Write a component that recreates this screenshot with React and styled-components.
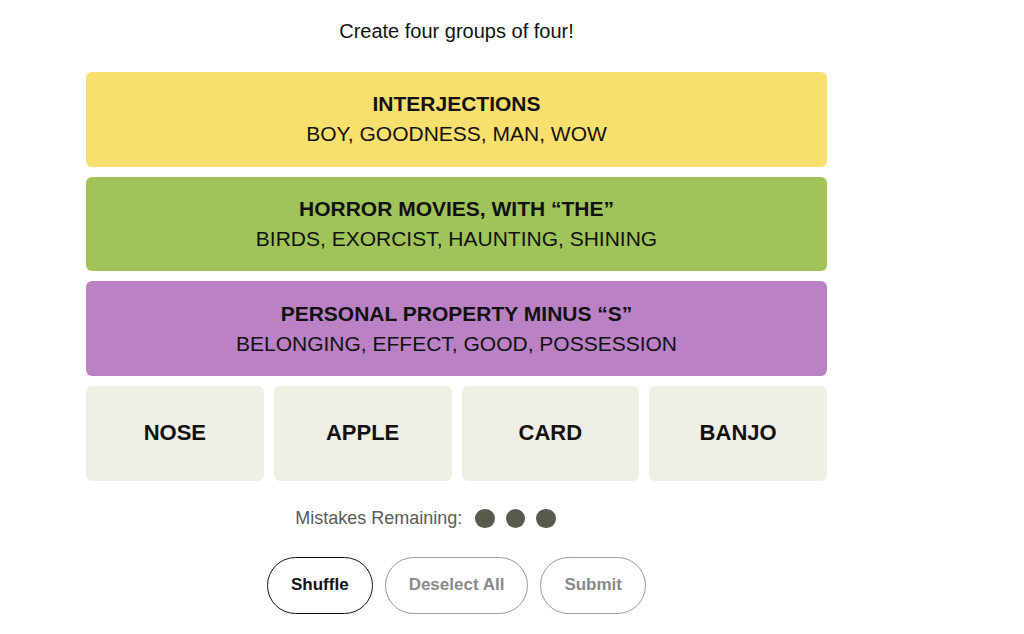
import React from "react";
import styled, { createGlobalStyle } from "styled-components";

const Global = createGlobalStyle`
  html, body { margin: 0; padding: 0; background: #ffffff; }
  body { font-family: "Liberation Sans", Arial, sans-serif; color: #121212; }
`;

const Page = styled.main`
  width: 741px;
  margin-left: 86px;
  padding-top: 19px;
  display: flex;
  flex-direction: column;
  align-items: center;
`;

const Prompt = styled.p`
  margin: 0;
  font-size: 20px;
  line-height: 24px;
  font-weight: 400;
  color: #121212;
`;

const Board = styled.section`
  margin-top: 29px;
  width: 100%;
  display: flex;
  flex-direction: column;
  gap: 10px;
`;

const Group = styled.div`
  height: 94.7px;
  border-radius: 6px;
  background: ${(p) => p.$color};
  display: flex;
  flex-direction: column;
  align-items: center;
  justify-content: center;
  text-transform: uppercase;
`;

const GroupTitle = styled.h3`
  margin: 0;
  font-size: 21px;
  font-weight: 700;
  line-height: 30px;
`;

const GroupMembers = styled.p`
  margin: 0;
  font-size: 21px;
  font-weight: 400;
  line-height: 30px;
`;

const TileRow = styled.div`
  display: grid;
  grid-template-columns: repeat(4, 1fr);
  gap: 10px;
`;

const Tile = styled.button`
  height: 94.7px;
  border: none;
  border-radius: 6px;
  background: #efefe6;
  color: #121212;
  font-family: inherit;
  font-size: 22px;
  font-weight: 700;
  text-transform: uppercase;
  padding: 0;
`;

const Mistakes = styled.div`
  margin-top: 27px;
  margin-right: 62px;
  display: flex;
  align-items: center;
  gap: 13px;
  font-size: 18px;
  color: #5a5a5a;
`;

const Dots = styled.span`
  display: flex;
  gap: 11px;
`;

const Dot = styled.span`
  width: 19.5px;
  height: 19.5px;
  border-radius: 50%;
  background: #5a594e;
`;

const Actions = styled.div`
  margin-top: 28px;
  display: flex;
  gap: 12px;
`;

const Pill = styled.button`
  height: 57px;
  padding: 0 23px;
  border-radius: 32px;
  background: #fff;
  border: 1px solid ${(p) => (p.$active ? "#121212" : "#9a9a9a")};
  color: ${(p) => (p.$active ? "#121212" : "#8a8a8a")};
  font-family: inherit;
  font-size: 17px;
  font-weight: 700;
`;

const groups = [
  { color: "#f9df6d", title: "Interjections", members: "Boy, Goodness, Man, Wow" },
  { color: "#a0c35a", title: "Horror Movies, With “The”", members: "Birds, Exorcist, Haunting, Shining" },
  { color: "#ba81c5", title: "Personal Property Minus “S”", members: "Belonging, Effect, Good, Possession" },
];

const tiles = ["Nose", "Apple", "Card", "Banjo"];

export default function App() {
  return (
    <>
      <Global />
      <Page>
        <Prompt>Create four groups of four!</Prompt>
        <Board>
          {groups.map((g) => (
            <Group key={g.title} $color={g.color}>
              <GroupTitle>{g.title}</GroupTitle>
              <GroupMembers>{g.members}</GroupMembers>
            </Group>
          ))}
          <TileRow>
            {tiles.map((t) => (
              <Tile key={t}>{t}</Tile>
            ))}
          </TileRow>
        </Board>
        <Mistakes>
          Mistakes Remaining:
          <Dots>
            <Dot />
            <Dot />
            <Dot />
          </Dots>
        </Mistakes>
        <Actions>
          <Pill $active>Shuffle</Pill>
          <Pill>Deselect All</Pill>
          <Pill>Submit</Pill>
        </Actions>
      </Page>
    </>
  );
}
